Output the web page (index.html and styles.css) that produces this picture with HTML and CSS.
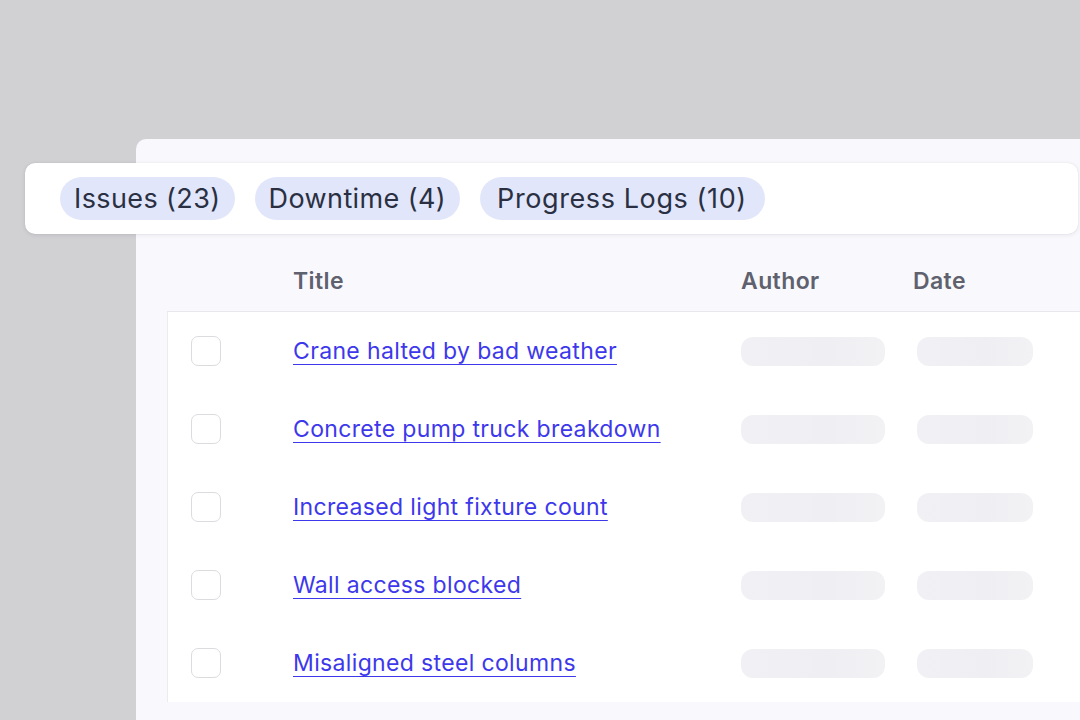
FILE: index.html
```html
<!DOCTYPE html>
<html>
<head>
<meta charset="utf-8">
<link rel="stylesheet" href="styles.css">
</head>
<body>
<div class="scene">
  <div class="panel">
    <div class="tabs">
      <span class="pill">Issues (23)</span>
      <span class="pill">Downtime (4)</span>
      <span class="pill pill-wide">Progress Logs (10)</span>
    </div>
    <div class="head">
      <span class="c-check"></span>
      <span class="c-title">Title</span>
      <span class="c-author">Author</span>
      <span class="c-date">Date</span>
    </div>
    <div class="table">
      <div class="row">
        <span class="c-check"><span class="box"></span></span>
        <span class="c-title"><a class="link">Crane halted by bad weather</a></span>
        <span class="c-author"><span class="sk sk-a"></span></span>
        <span class="c-date"><span class="sk sk-d"></span></span>
      </div>
      <div class="row">
        <span class="c-check"><span class="box"></span></span>
        <span class="c-title"><a class="link">Concrete pump truck breakdown</a></span>
        <span class="c-author"><span class="sk sk-a"></span></span>
        <span class="c-date"><span class="sk sk-d"></span></span>
      </div>
      <div class="row">
        <span class="c-check"><span class="box"></span></span>
        <span class="c-title"><a class="link">Increased light fixture count</a></span>
        <span class="c-author"><span class="sk sk-a"></span></span>
        <span class="c-date"><span class="sk sk-d"></span></span>
      </div>
      <div class="row">
        <span class="c-check"><span class="box"></span></span>
        <span class="c-title"><a class="link">Wall access blocked</a></span>
        <span class="c-author"><span class="sk sk-a"></span></span>
        <span class="c-date"><span class="sk sk-d"></span></span>
      </div>
      <div class="row">
        <span class="c-check"><span class="box"></span></span>
        <span class="c-title"><a class="link">Misaligned steel columns</a></span>
        <span class="c-author"><span class="sk sk-a"></span></span>
        <span class="c-date"><span class="sk sk-d"></span></span>
      </div>
    </div>
  </div>
</div>
</body>
</html>
```
FILE: styles.css
```css
html, body {
  margin: 0;
  padding: 0;
  height: 100%;
}
body {
  background: #d1d0d3;
  overflow: hidden;
  font-family: Inter, "Noto Sans", sans-serif;
}
.scene {
  padding-top: 139px;
  width: 1080px;
  height: 720px;
  box-sizing: border-box;
  overflow: hidden;
}
.panel {
  margin-left: 136px;
  margin-right: -40px;
  height: 581px;
  background: #f9f9fd;
  border-top-left-radius: 10px;
  padding-top: 24px;
  box-sizing: border-box;
}
.tabs {
  margin-left: -111px;
  margin-right: 42px;
  height: 71px;
  box-sizing: border-box;
  background: #ffffff;
  border-radius: 10px;
  box-shadow: 0 1px 4px rgba(30, 30, 60, 0.10), 0 0 1px rgba(30, 30, 60, 0.12);
  display: flex;
  align-items: center;
  gap: 20px;
  padding-left: 35px;
}
.pill {
  height: 43px;
  display: flex;
  align-items: center;
  padding: 0 14px;
  border-radius: 22px;
  background: #e1e6fb;
  color: #2a3042;
  font-size: 27px;
  letter-spacing: 0.4px;
}
.pill-wide {
  padding: 0 18px 0 17px;
  letter-spacing: 0.6px;
}
.head, .row {
  display: grid;
  grid-template-columns: 126px 448px 172px 1fr;
  align-items: center;
}
.head {
  margin-left: 31px;
  height: 77px;
  align-items: end;
  padding-bottom: 16px;
  box-sizing: border-box;
  color: #5f616e;
  font-size: 23px;
  font-weight: 600;
  letter-spacing: 0.4px;
  line-height: 28px;
}
.table {
  margin-left: 31px;
  background: #ffffff;
  border-top: 1px solid #e7e7ec;
  border-left: 1px solid #ececf0;
}
.row {
  height: 78px;
  margin-left: -1px;
}
.c-check {
  padding-left: 24px;
  display: flex;
}
.box {
  width: 30px;
  height: 30px;
  box-sizing: border-box;
  border: 1px solid #dcdce0;
  border-radius: 7px;
  background: #fff;
}
.link {
  color: #3d38eb;
  font-size: 23px;
  letter-spacing: 0.35px;
  text-decoration: underline;
  text-decoration-thickness: 1px;
  text-underline-offset: 5px;
}
.sk {
  display: block;
  height: 29px;
  border-radius: 12px;
  background: linear-gradient(90deg, #f1f0f4, #efeef2 60%, #f2f1f4);
}
.sk-a { width: 144px; }
.sk-d { width: 116px; margin-left: 4px; }
```
